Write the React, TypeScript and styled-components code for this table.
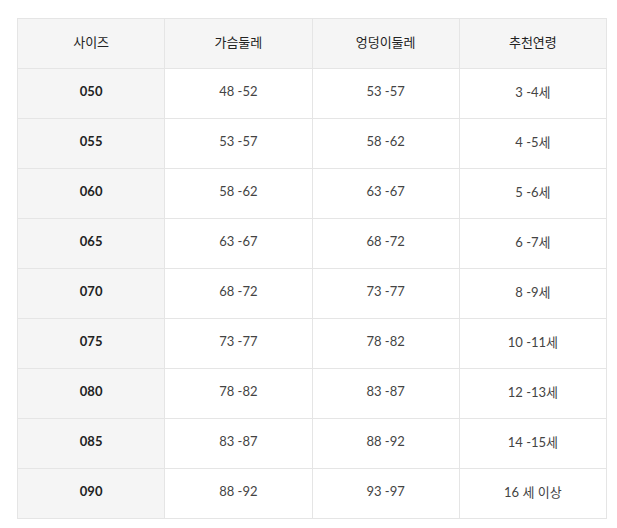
import React from "react";
import styled, { createGlobalStyle } from "styled-components";

const GlobalStyle = createGlobalStyle`
  body {
    margin: 0;
    background: #ffffff;
    font-family: Lato, "Noto Sans CJK KR", sans-serif;
  }
`;

const Page = styled.div`
  padding: 18px 11px 0 17px;
`;

const Table = styled.table`
  width: 590px;
  border-collapse: collapse;
  table-layout: fixed;
  border: 1px solid #e5e5e5;
`;

const Row = styled.tr`
  height: 50px;
`;

const HeadCell = styled.th`
  padding: 0 0 4px;
  background: #f5f5f5;
  border: 1px solid #e5e5e5;
  font-size: 13px;
  font-weight: normal;
  color: #222;
  text-align: center;
  vertical-align: middle;
`;

const Cell = styled.td<{ $key?: boolean }>`
  padding: 0 0 5px;
  border: 1px solid #e5e5e5;
  background: ${(p) => (p.$key ? "#f5f5f5" : "#ffffff")};
  font-size: 13px;
  font-weight: ${(p) => (p.$key ? 700 : 400)};
  color: ${(p) => (p.$key ? "#222" : "#444")};
  text-align: center;
  vertical-align: middle;
`;

const rows = [
  ["050", "48 -52", "53 -57", "3 -4세"],
  ["055", "53 -57", "58 -62", "4 -5세"],
  ["060", "58 -62", "63 -67", "5 -6세"],
  ["065", "63 -67", "68 -72", "6 -7세"],
  ["070", "68 -72", "73 -77", "8 -9세"],
  ["075", "73 -77", "78 -82", "10 -11세"],
  ["080", "78 -82", "83 -87", "12 -13세"],
  ["085", "83 -87", "88 -92", "14 -15세"],
  ["090", "88 -92", "93 -97", "16 세 이상"],
];

export default function App() {
  return (
    <Page>
      <GlobalStyle />
      <Table>
        <thead>
          <Row>
            <HeadCell>사이즈</HeadCell>
            <HeadCell>가슴둘레</HeadCell>
            <HeadCell>엉덩이둘레</HeadCell>
            <HeadCell>추천연령</HeadCell>
          </Row>
        </thead>
        <tbody>
          {rows.map((r) => (
            <Row key={r[0]}>
              <Cell $key>{r[0]}</Cell>
              <Cell>{r[1]}</Cell>
              <Cell>{r[2]}</Cell>
              <Cell>{r[3]}</Cell>
            </Row>
          ))}
        </tbody>
      </Table>
    </Page>
  );
}
